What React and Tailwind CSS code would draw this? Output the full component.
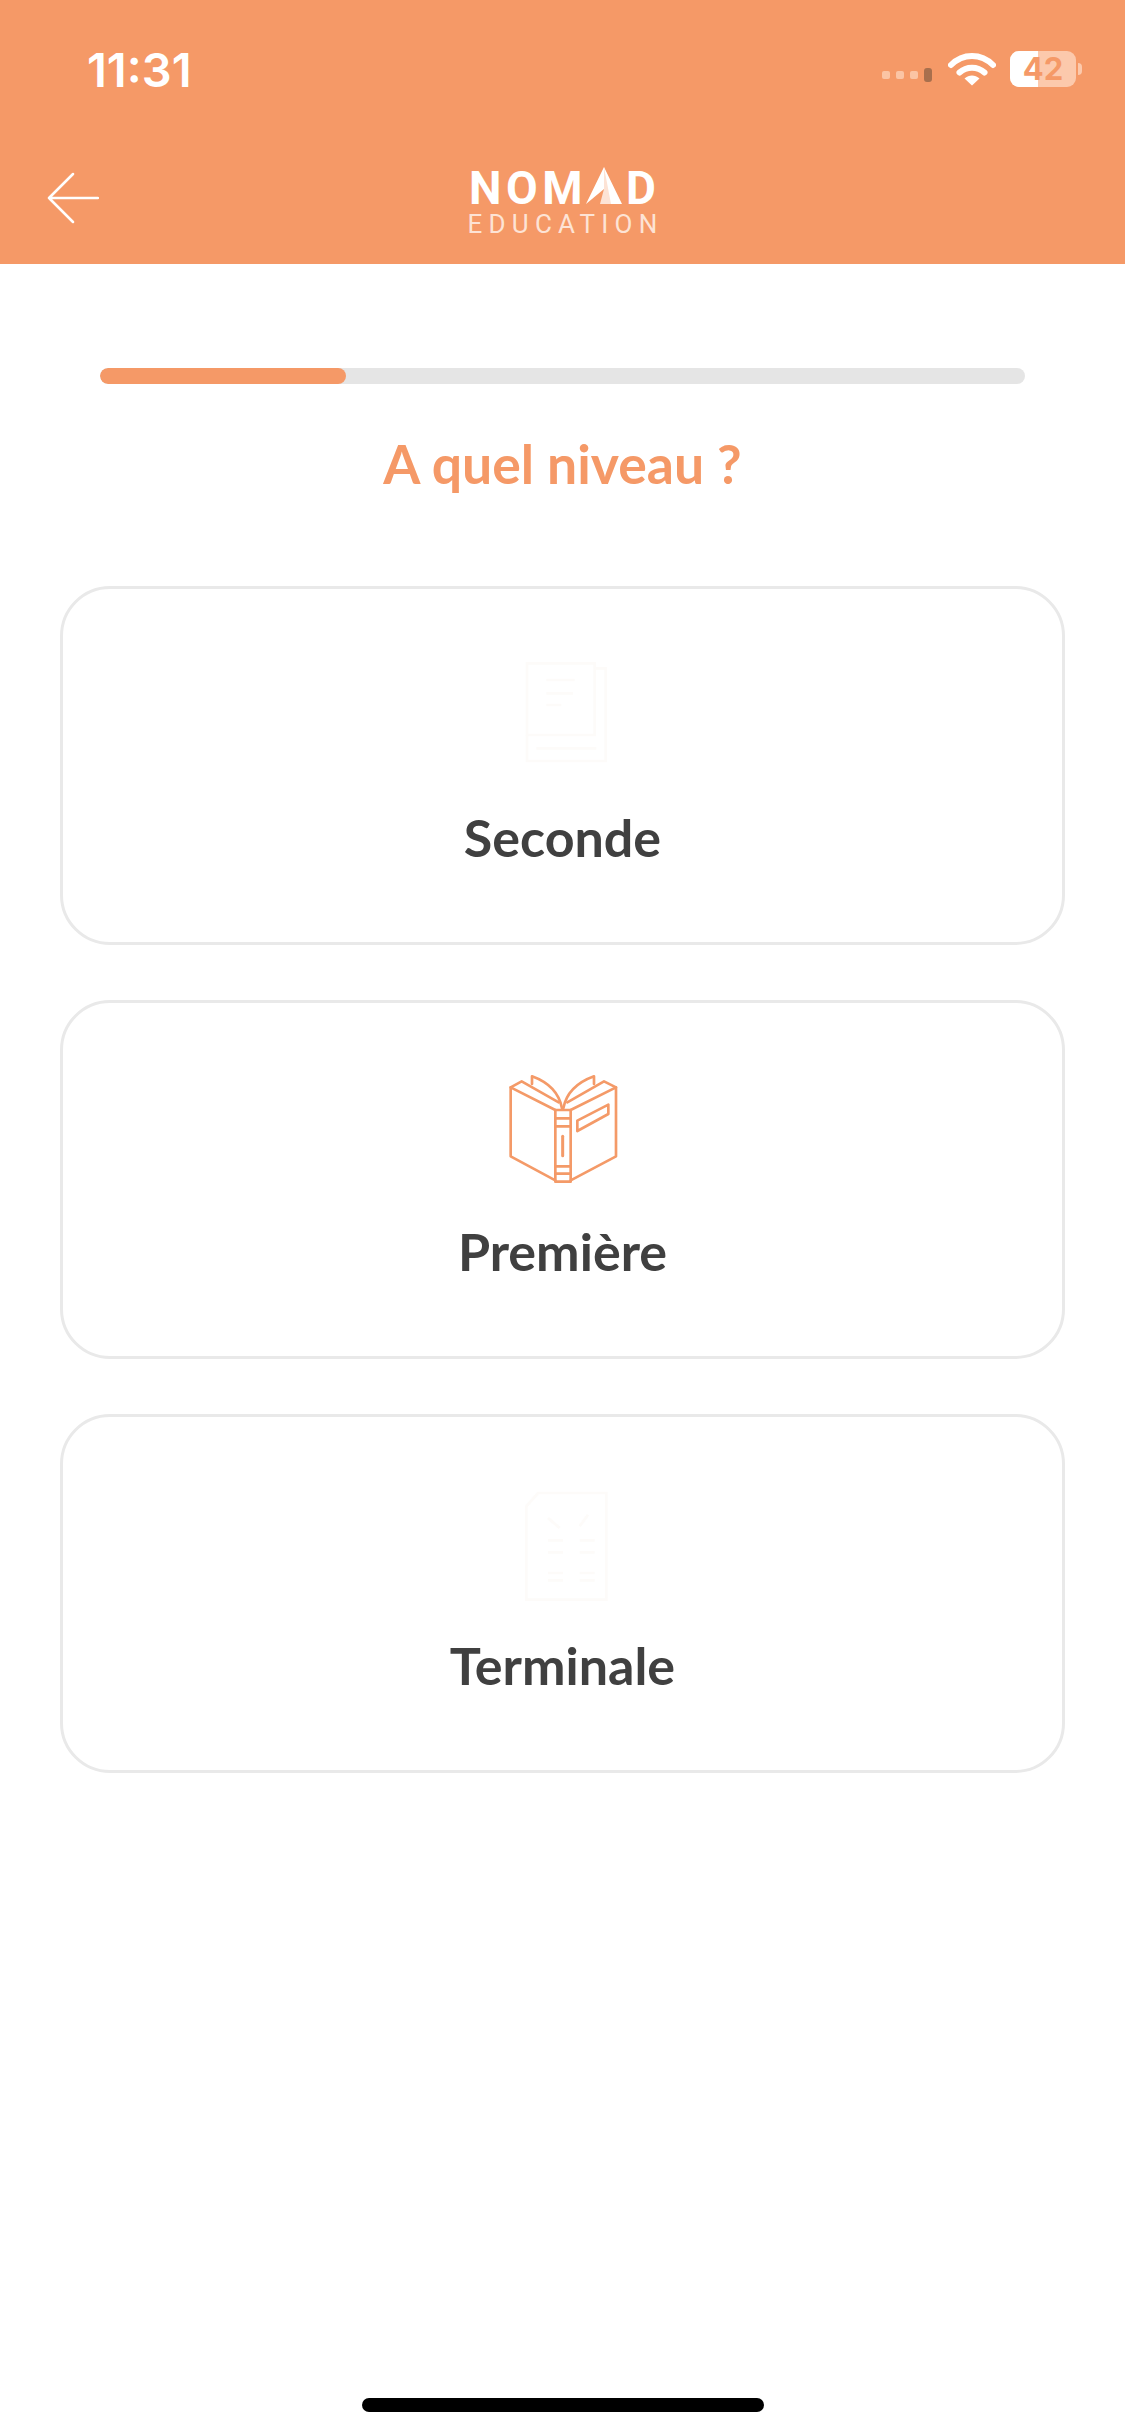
import React from "react";

const lato = { fontFamily: '"Lato", "Liberation Sans", sans-serif' };

function Wifi() {
  return (
    <svg width="48" height="34" viewBox="0 0 48 34" fill="none" className="block">
      <path d="M3 13 C15 1 33 1 45 13" stroke="#fff" strokeWidth="6" strokeLinecap="round" />
      <path d="M11.500 20.500 C18.500 14 29.500 14 36.500 20.500" stroke="#fff" strokeWidth="6" strokeLinecap="round" />
      <path d="M16.500 26.500 C21 22.500 27 22.500 31.500 26.500 L24 33.500 Z" fill="#fff" />
    </svg>
  );
}

function Book() {
  const s = { stroke: "#f49a68", strokeWidth: 8, strokeLinejoin: "round", strokeLinecap: "round", fill: "none" };
  return (
    <svg width="160" height="150" viewBox="9 0 480 450" className="block">
      <g {...s}>
        <path d="M226 394 L92 322 V115 L226 183" />
        <path d="M272 183 L408 115 V322 L272 394" />
        <path d="M226 183 H272 V398 H226 Z" />
        <path d="M226 208 H272 M226 232 H272 M226 352 H272 M226 374 H272" />
        <path d="M92 115 L125 97 L236 160" />
        <path d="M408 115 L372 97 L262 160" />
        <path d="M156 105 V82 C200 98 236 125 246 178" />
        <path d="M342 105 V82 C298 98 260 125 250 178" />
        <path d="M248 262 V320" strokeWidth="9" />
        <path d="M292 215 L385 167 V195 L292 246 Z" />
      </g>
    </svg>
  );
}

function FaintSecond() {
  return (
    <svg width="160" height="150" viewBox="0 0 480 450" className="block">
      <g stroke="#fdfbf9" strokeWidth="8" fill="none">
        <path d="M132 85 H335 V300 H132 Z" />
        <path d="M132 300 V378 H368 V100 H335" />
        <path d="M160 340 H340" />
        <path d="M190 135 H275 M190 175 H270 M190 210 H235" />
      </g>
    </svg>
  );
}

function FaintTerminal() {
  return (
    <svg width="160" height="150" viewBox="0 0 480 450" className="block">
      <g stroke="#fdfbf9" strokeWidth="8" fill="none">
        <path d="M130 130 L165 90 H370 V410 H130 Z" />
        <path d="M195 165 L230 195 M290 190 L315 155" />
        <path d="M195 232 H240 M290 232 H335 M195 268 H240 M290 268 H335 M195 330 H240 M290 330 H335 M195 352 H240 M290 352 H335" />
      </g>
    </svg>
  );
}

function Card({ label, children }) {
  return (
    <div className="h-[359px] rounded-[50px] border-[3px] border-[#e9e9e9] bg-white flex flex-col items-center">
      <div className="h-[150px] w-[160px] mt-[46px]">{children}</div>
      <div className="mt-[21px] text-[52px] leading-[62px] font-bold text-[#404040]" style={lato}>
        {label}
      </div>
    </div>
  );
}

export default function App() {
  return (
    <div className="w-[1125px] h-[2436px] bg-white flex flex-col overflow-hidden">
      <header className="h-[264px] bg-[#f59967] flex flex-col shrink-0">
        <div className="h-[125px] flex items-start justify-between pl-[87px] pr-[43px] pt-[43px]">
          <span
            className="text-[47px] leading-[54px] font-semibold text-white"
            style={{ fontFamily: '"Inter", "Liberation Sans", sans-serif' }}
          >
            11:31
          </span>
          <div className="flex items-center mt-[8px]">
            <div className="flex items-center gap-[6px] mt-[12px]">
              <span className="w-[8px] h-[8px] rounded-[2px] bg-[#fbc4a4]" />
              <span className="w-[8px] h-[8px] rounded-[2px] bg-[#fbc4a4]" />
              <span className="w-[8px] h-[8px] rounded-[2px] bg-[#fbc4a4]" />
              <span className="w-[8px] h-[14px] rounded-[3px] bg-[#a86f4d]" />
            </div>
            <div className="ml-[16px]">
              <Wifi />
            </div>
            <div className="ml-[14px] relative w-[66px] h-[36px] rounded-[9px] bg-[#fcc9ac]">
              <div className="absolute inset-y-0 left-0 w-[28px] rounded-l-[9px] bg-white" />
              <div
                className="absolute inset-0 flex items-center justify-center text-[31px] leading-[36px] font-bold text-[#f59967]"
                style={{ fontFamily: '"Inter", "Liberation Sans", sans-serif' }}
              >
                42
              </div>
            </div>
            <span className="ml-[2px] w-[4px] h-[12px] rounded-r-[4px] bg-[#fcc9ac]" />
          </div>
        </div>
        <div className="relative flex-1 flex justify-center">
          <svg width="52" height="52" viewBox="0 0 52 52" fill="none" className="absolute left-[47px] top-[47px]">
            <path d="M26 2 L2 26 L26 50 M2 26 H51" stroke="#fff" strokeWidth="2.500" strokeLinecap="round" strokeLinejoin="round" />
          </svg>
          <div className="flex flex-col items-center mt-[42px] w-[190px]">
            <div
              className="flex items-end h-[38px] text-[46px] leading-[34px] font-bold text-white"
              style={{ fontFamily: '"Roboto", "Liberation Sans", sans-serif' }}
            >
              <span className="leading-[34px] tracking-[4.500px]">NOM</span>
              <svg width="36" height="38" viewBox="0 0 36 38" className="block mr-[4px] ml-[-1px]">
                <path d="M18 0 L36 37 H24 L18 22 L0 37 Z" fill="#fff" />
                <path d="M18 0 L25 37 H14 L18 22 Z" fill="#fde3d5" />
              </svg>
              <span className="leading-[34px]">D</span>
            </div>
            <div
              className="text-[26px] leading-[26px] mt-[6px] ml-[6px] font-normal text-[#fde3d5] tracking-[6.200px] whitespace-nowrap"
              style={{ fontFamily: '"Roboto", "Liberation Sans", sans-serif' }}
            >
              EDUCATION
            </div>
          </div>
        </div>
      </header>

      <main className="flex-1 flex flex-col px-[60px]">
        <div className="mx-[40px] mt-[104px] h-[16px] rounded-full bg-[#e5e5e5] overflow-hidden">
          <div className="h-full w-[246px] rounded-full bg-[#f59967]" />
        </div>
        <h1 className="mt-[47px] text-center text-[53.500px] leading-[64px] font-bold text-[#f59967]" style={lato}>
          A quel niveau ?
        </h1>
        <div className="mt-[91px] flex flex-col gap-[55px]">
          <Card label="Seconde">
            <FaintSecond />
          </Card>
          <Card label="Première">
            <Book />
          </Card>
          <Card label="Terminale">
            <FaintTerminal />
          </Card>
        </div>
      </main>

      <div className="flex justify-center pb-[24px] shrink-0">
        <div className="w-[402px] h-[14px] rounded-full bg-black" />
      </div>
    </div>
  );
}
